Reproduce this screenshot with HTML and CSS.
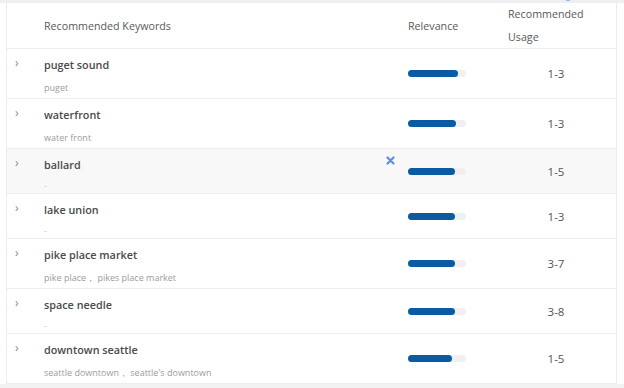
FILE: index.html
```html
<!DOCTYPE html>
<html>
<head>
    <title>Keyword Suggestions</title>
    <link rel="stylesheet" href="styles.css">
</head>
<body>
    <div class="top-strip"><span class="top-mark"></span></div>

    <div class="keyword-table">
        <div class="table-head">
            <div></div>
            <div class="head-cell">Recommended Keywords</div>
            <div class="head-cell">Relevance</div>
            <div class="head-cell head-usage">Recommended<br>Usage</div>
        </div>

        <div class="kw-row">
            <div class="chevron">&#8250;</div>
            <div class="kw-cell">
                <div class="kw-title">puget sound</div>
                <div class="kw-sub">puget</div>
            </div>
            <div class="rel-cell"><div class="bar"><div class="bar-fill" style="width: 50px;"></div></div></div>
            <div class="usage-cell">1-3</div>
        </div>

        <div class="kw-row">
            <div class="chevron">&#8250;</div>
            <div class="kw-cell">
                <div class="kw-title">waterfront</div>
                <div class="kw-sub">water front</div>
            </div>
            <div class="rel-cell"><div class="bar"><div class="bar-fill" style="width: 48px;"></div></div></div>
            <div class="usage-cell">1-3</div>
        </div>

        <div class="kw-row hovered">
            <div class="chevron">&#8250;</div>
            <div class="kw-cell">
                <div class="kw-title">ballard</div>
                <div class="kw-sub empty">-</div>
                <span class="remove-icon">
                    <svg width="9" height="9" viewBox="0 0 9 9"><path d="M1.5 1.5 L7.5 7.5 M7.5 1.5 L1.5 7.5" stroke="#5b8ee8" stroke-width="2.2" stroke-linecap="round"/></svg>
                </span>
            </div>
            <div class="rel-cell"><div class="bar"><div class="bar-fill" style="width: 47px;"></div></div></div>
            <div class="usage-cell">1-5</div>
        </div>

        <div class="kw-row">
            <div class="chevron">&#8250;</div>
            <div class="kw-cell">
                <div class="kw-title">lake union</div>
                <div class="kw-sub empty">-</div>
            </div>
            <div class="rel-cell"><div class="bar"><div class="bar-fill" style="width: 47px;"></div></div></div>
            <div class="usage-cell">1-3</div>
        </div>

        <div class="kw-row">
            <div class="chevron">&#8250;</div>
            <div class="kw-cell">
                <div class="kw-title">pike place market</div>
                <div class="kw-sub">pike place&#65292; pikes place market</div>
            </div>
            <div class="rel-cell"><div class="bar"><div class="bar-fill" style="width: 47px;"></div></div></div>
            <div class="usage-cell">3-7</div>
        </div>

        <div class="kw-row">
            <div class="chevron">&#8250;</div>
            <div class="kw-cell">
                <div class="kw-title">space needle</div>
                <div class="kw-sub empty">-</div>
            </div>
            <div class="rel-cell"><div class="bar"><div class="bar-fill" style="width: 47px;"></div></div></div>
            <div class="usage-cell">3-8</div>
        </div>

        <div class="kw-row">
            <div class="chevron">&#8250;</div>
            <div class="kw-cell">
                <div class="kw-title">downtown seattle</div>
                <div class="kw-sub">seattle downtown&#65292; seattle's downtown</div>
            </div>
            <div class="rel-cell"><div class="bar"><div class="bar-fill" style="width: 44px;"></div></div></div>
            <div class="usage-cell">1-5</div>
        </div>
    </div>

    <div class="bottom-strip"></div>
</body>
</html>
```

FILE: styles.css
```css
body {
    margin: 0;
    background-color: white;
    font-family: "Open Sans", sans-serif;
    color: #555;
}

.top-strip {
    height: 3px;
    background-color: #efeff1;
}

.top-mark {
    display: block;
    width: 4px;
    height: 1px;
    margin-left: 566px;
    background-color: #9cc0ec;
}

.keyword-table {
    margin: 0 7px 0 6px;
    border-left: 1px solid #ececee;
    border-right: 1px solid #ececee;
}

.table-head,
.kw-row {
    display: grid;
    grid-template-columns: 37px 364px 88px 120px;
    border-bottom: 1px solid #eeeef0;
}

.table-head {
    height: 45px;
    align-items: center;
    font-size: 10.7px;
    color: #595959;
}

.head-usage {
    padding-left: 12px;
    line-height: 23px;
}

.kw-row {
    position: relative;
}

.kw-row.hovered {
    background-color: #f8f8f8;
}

.chevron {
    padding-top: 6px;
    padding-left: 8px;
    font-size: 12px;
    line-height: 16px;
    color: #888;
}

.kw-cell {
    position: relative;
    padding-top: 8px;
}

.kw-title {
    font-size: 10.8px;
    font-weight: 600;
    line-height: 16px;
    color: #4a4a4a;
}

.kw-sub {
    margin-top: 5px;
    font-size: 9px;
    line-height: 20px;
    color: #9c9c9c;
}

.kw-sub.empty {
    line-height: 15px;
    color: #c8c8c8;
}

.remove-icon {
    position: absolute;
    left: 342px;
    top: 7px;
    width: 9px;
    height: 9px;
}

.remove-icon svg {
    display: block;
}

.rel-cell {
    display: flex;
    align-items: center;
}

.bar {
    width: 58px;
    height: 7px;
    border-radius: 4px;
    background-color: #f0f0f2;
}

.bar-fill {
    height: 7px;
    border-radius: 4px;
    background-color: #0b5aa2;
}

.usage-cell {
    display: flex;
    align-items: center;
    justify-content: center;
    font-size: 11.5px;
    color: #555;
}

.bottom-strip {
    height: 7px;
    background-color: #f2f2f3;
}
```
